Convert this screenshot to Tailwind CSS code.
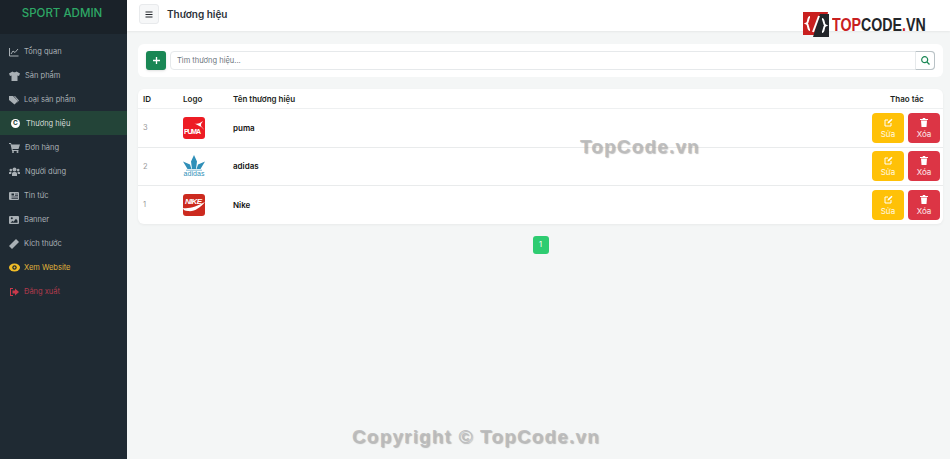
<!DOCTYPE html>
<html lang="en">

<head>
    <meta charset="UTF-8">
    <title>Thương hiệu</title>
    <script src="https://cdn.jsdelivr.net/npm/@tailwindcss/browser@4"></script>
</head>

<body class="relative h-[459px] w-[950px] overflow-hidden flex bg-[#f4f6f6] font-['Inter','Noto_Sans',sans-serif]">
    <!-- Sidebar -->
    <aside class="w-[127px] shrink-0 bg-[#1f2a33] flex flex-col">
        <div class="h-[34px] bg-[#1a2229] flex items-center justify-center text-[#2ea866] text-[11.500px] font-medium pb-[7px] pr-[3px]">SPORT ADMIN</div>
        <nav class="flex flex-col pt-[5px] text-[7.500px] text-[#a9b0b5]">
            <a class="h-6 pt-px flex items-center pl-[9px] gap-[5px]">
                <svg class="w-[10px] h-[10px]" viewBox="0 0 10 10" fill="none" stroke="#a9b0b5" stroke-width="1"><path d="M.5 1v8h9"/><path d="M2 7l2-3 2 1.500 3-3.500"/></svg>
                Tổng quan</a>
            <a class="h-6 pt-px flex items-center pl-[9px] gap-[5px]">
                <svg class="w-[11px] h-[10px]" viewBox="0 0 11 10" fill="#a9b0b5"><path d="M3.500 0.500L0 2.500l1 2.500 1.500-.5V10h6V4.500L10 5l1-2.500L7.500.5C7 1.500 4 1.500 3.500.5z"/></svg>
                Sản phẩm</a>
            <a class="h-6 pt-px flex items-center pl-[9px] gap-[5px]">
                <svg class="w-[10px] h-[10px]" viewBox="0 0 10 10" fill="#a9b0b5"><path d="M0 1h4l5 5-3.500 3.500L0 5z"/><path d="M6 1l4 4.500-2.500 3 1.500-2.500L5 1z"/></svg>
                Loại sản phẩm</a>
            <a class="h-6 pt-px flex items-center pl-[11px] gap-[6px] bg-[#234438] text-[#d5dcd9]">
                <span class="w-[9px] h-[9px] rounded-full bg-white text-[#234438] text-[6.500px] leading-none font-bold flex items-center justify-center">C</span>
                Thương hiệu</a>
            <a class="h-6 pt-px flex items-center pl-[9px] gap-[5px]">
                <svg class="w-[11px] h-[10px]" viewBox="0 0 11 10" fill="#a9b0b5"><path d="M0 0h2l.5 1.500H11L9.500 6H3.500l.2 1H9.500v1H3L1.500 1H0z"/><circle cx="4" cy="9" r="1"/><circle cx="8.500" cy="9" r="1"/></svg>
                Đơn hàng</a>
            <a class="h-6 pt-px flex items-center pl-[9px] gap-[5px]">
                <svg class="w-[11px] h-[10px]" viewBox="0 0 11 10" fill="#a9b0b5"><circle cx="5.500" cy="2.500" r="2"/><circle cx="1.800" cy="3" r="1.300"/><circle cx="9.200" cy="3" r="1.300"/><path d="M3 9V6.500C3 5.500 4 5 5.500 5S8 5.500 8 6.500V9z"/><path d="M0 7V5.500C0 5 .8 4.800 2.500 4.800L2.200 7zM11 7V5.500c0-.5-.8-.7-2.500-.7L8.800 7z"/></svg>
                Người dùng</a>
            <a class="h-6 pt-px flex items-center pl-[9px] gap-[5px]">
                <svg class="w-[10px] h-[10px]" viewBox="0 0 10 10"><rect y="1" width="10" height="8" rx="1" fill="#a9b0b5"/><rect x="2.500" y="2.500" width="2.500" height="2" fill="#1f2a33"/><path d="M6 3h3M6 4.500h3M2.500 6h6.500M2.500 7.500h6.500" stroke="#1f2a33" stroke-width=".7"/></svg>
                Tin tức</a>
            <a class="h-6 pt-px flex items-center pl-[9px] gap-[5px]">
                <svg class="w-[10px] h-[10px]" viewBox="0 0 10 10"><rect y="1" width="10" height="8" rx="1" fill="#a9b0b5"/><circle cx="2.800" cy="3.300" r="1" fill="#1f2a33"/><path d="M1.500 7.800l2-2 1 1 2.500-3 1.500 2v2z" fill="#1f2a33"/></svg>
                Banner</a>
            <a class="h-6 pt-px flex items-center pl-[9px] gap-[5px]">
                <svg class="w-[10px] h-[10px]" viewBox="0 0 10 10" fill="#a9b0b5"><path d="M7 0l3 3-7 7-3-3z"/></svg>
                Kích thước</a>
            <a class="h-6 pt-px flex items-center pl-[9px] gap-[4px] text-[#e0b43a]">
                <svg class="w-[11px] h-[9px]" viewBox="0 0 11 9"><ellipse cx="5.500" cy="4.500" rx="5.500" ry="4" fill="#f2bd27"/><circle cx="5.500" cy="4.500" r="2.200" fill="#1f2a33"/><circle cx="5.500" cy="4.500" r="1" fill="#f2bd27"/></svg>
                Xem Website</a>
            <a class="h-6 pt-px flex items-center pl-[9px] gap-[5px] text-[#b23a4c]">
                <svg class="w-[10px] h-[10px]" viewBox="0 0 10 10" fill="#c9394b"><path d="M4 1H1v8h3V8H2V2h2z"/><path d="M6 1.500L10 5 6 8.500V6.500H3.500v-3H6z"/></svg>
                Đăng xuất</a>
        </nav>
    </aside>

    <!-- Main -->
    <main class="flex-1 min-w-0 flex flex-col">
        <header class="h-[31px] bg-white shadow-[0_1px_2px_rgba(0,0,0,0.06)] flex items-center pl-[12px]">
            <button class="w-5 h-5 rounded-[3px] bg-[#f6f7f8] border border-[#e8eaec] flex items-center justify-center mb-[3px]">
                <svg class="w-[8px] h-[7px]" viewBox="0 0 8 7" fill="none" stroke="#212529" stroke-width="1.200"><path d="M.5 1h7M.5 3.500h7M.5 6h7"/></svg>
            </button>
            <h1 class="ml-2 text-[10px] font-semibold text-[#2b3036] mb-[3px]">Thương hiệu</h1>
        </header>

        <div class="px-[11px] pt-[13px] pr-[7px]">
            <!-- Search card -->
            <div class="h-[33px] bg-white rounded-md flex items-center px-[8px] gap-[4px] pb-[1px]">
                <button class="w-5 h-[19px] rounded-[3px] bg-[#198754] shadow-sm flex items-center justify-center">
                    <svg class="w-[7px] h-[7px]" viewBox="0 0 8 8" stroke="#fff" stroke-width="1.500"><path d="M4 0v8M0 4h8"/></svg>
                </button>
                <div class="flex-1 h-[19px] rounded-[4px] border border-[#e6e9eb] flex items-center justify-between pl-[6px] pt-px text-[7.500px] text-[#6c757d]">
                    Tìm thương hiệu...
                    <span class="w-5 h-[19px] -mr-px flex items-center justify-center rounded-r-[4px] border border-[#b9c2c6] border-l-[#e6e9eb]">
                        <svg class="w-[9px] h-[9px]" viewBox="0 0 9 9" fill="none" stroke="#198754" stroke-width="1.200"><circle cx="3.700" cy="3.700" r="3"/><path d="M6 6l2.500 2.500"/></svg>
                    </span>
                </div>
            </div>

            <!-- Table card -->
            <div class="mt-3 bg-white rounded-md shadow-[0_1px_3px_rgba(0,0,0,0.05)] overflow-hidden">
                <div class="h-5 flex items-center text-[8px] font-semibold text-[#1c1f22] border-b border-[#eef0f1]">
                    <span class="w-[45px] pl-[5px]">ID</span>
                    <span class="w-[50px]">Logo</span>
                    <span class="flex-1">Tên thương hiệu</span>
                    <span class="w-[53px]">Thao tác</span>
                </div>

                <div class="h-[38.500px] flex items-center border-b border-[#e9ebec] text-[8px]">
                    <span class="w-[45px] pl-[5px] text-[#999] text-[7.500px]">3</span>
                    <span class="w-[50px]">
                        <svg class="w-[22px] h-[22px]" viewBox="0 0 22 22"><rect width="22" height="22" rx="3" fill="#ed1c24"/><path d="M11 6c3 2 6 0 9-2-1 2-2 2-2 4s2 2 3 5c-2-4-6-4-10-7z" fill="#fff"/><text x="1" y="16.500" font-size="7" font-weight="900" fill="#fff" font-family="Liberation Sans" textLength="17">PUMA</text></svg>
                    </span>
                    <span class="flex-1 font-semibold text-[#111]">puma</span>
                    <span class="flex gap-[4px] pr-[3px]">
                        <button class="w-8 h-[30px] rounded-[4px] bg-[#ffc107] flex flex-col items-center justify-center gap-[3px] text-[8px] leading-none text-white/90">
                            <svg class="w-[9px] h-[9px]" viewBox="0 0 9 9" fill="none" stroke="#fff" stroke-width="1"><path d="M7 5v3H1V2h3"/><path d="M3.500 5.500l.3-1.500L7.500.8l1 1L5 5.300z" fill="#fff" stroke="none"/></svg>
                            Sửa</button>
                        <button class="w-8 h-[30px] rounded-[4px] bg-[#dc3545] flex flex-col items-center justify-center gap-[3px] text-[8px] leading-none text-white/90">
                            <svg class="w-[8px] h-[9px]" viewBox="0 0 8 9" fill="#fff"><path d="M0 1h2.500L3 0h2l.5 1H8v1H0zM1 2.500h6L6.500 9h-5z"/></svg>
                            Xóa</button>
                    </span>
                </div>

                <div class="h-[38.500px] flex items-center border-b border-[#e9ebec] text-[8px]">
                    <span class="w-[45px] pl-[5px] text-[#999] text-[7.500px]">2</span>
                    <span class="w-[50px]">
                        <svg class="w-[22px] h-[22px]" viewBox="0 0 22 22"><path d="M0 6.500l7 3 1.500 4.500H4.500zM22 6.500l-7 3-1.500 4.500h4zM11 0l3 6.500-1 7.500H9L8 6.500z" fill="#2f8fb8"/><path d="M3 15.200h16" stroke="#2f8fb8" stroke-width=".6"/><text x="11" y="21" text-anchor="middle" font-size="7" fill="#2f8fb8" font-family="Liberation Sans" textLength="21">adidas</text></svg>
                    </span>
                    <span class="flex-1 font-semibold text-[#111]">adidas</span>
                    <span class="flex gap-[4px] pr-[3px]">
                        <button class="w-8 h-[30px] rounded-[4px] bg-[#ffc107] flex flex-col items-center justify-center gap-[3px] text-[8px] leading-none text-white/90">
                            <svg class="w-[9px] h-[9px]" viewBox="0 0 9 9" fill="none" stroke="#fff" stroke-width="1"><path d="M7 5v3H1V2h3"/><path d="M3.500 5.500l.3-1.500L7.500.8l1 1L5 5.300z" fill="#fff" stroke="none"/></svg>
                            Sửa</button>
                        <button class="w-8 h-[30px] rounded-[4px] bg-[#dc3545] flex flex-col items-center justify-center gap-[3px] text-[8px] leading-none text-white/90">
                            <svg class="w-[8px] h-[9px]" viewBox="0 0 8 9" fill="#fff"><path d="M0 1h2.500L3 0h2l.5 1H8v1H0zM1 2.500h6L6.500 9h-5z"/></svg>
                            Xóa</button>
                    </span>
                </div>

                <div class="h-[38px] flex items-center text-[8px]">
                    <span class="w-[45px] pl-[5px] text-[#999] text-[7.500px]">1</span>
                    <span class="w-[50px]">
                        <svg class="w-[22px] h-[22px]" viewBox="0 0 22 22"><rect width="22" height="22" rx="3" fill="#cc2a1f"/><path d="M0 14c7 1 14-2 22-6-5 6-11 10-17 9-3 0-5-1-5-3z" fill="#fff"/><text x="2" y="10" font-size="8" font-weight="900" font-style="italic" fill="#fff" font-family="Liberation Sans" textLength="17">NIKE</text></svg>
                    </span>
                    <span class="flex-1 font-semibold text-[#111]">Nike</span>
                    <span class="flex gap-[4px] pr-[3px]">
                        <button class="w-8 h-[30px] rounded-[4px] bg-[#ffc107] flex flex-col items-center justify-center gap-[3px] text-[8px] leading-none text-white/90">
                            <svg class="w-[9px] h-[9px]" viewBox="0 0 9 9" fill="none" stroke="#fff" stroke-width="1"><path d="M7 5v3H1V2h3"/><path d="M3.500 5.500l.3-1.500L7.500.8l1 1L5 5.300z" fill="#fff" stroke="none"/></svg>
                            Sửa</button>
                        <button class="w-8 h-[30px] rounded-[4px] bg-[#dc3545] flex flex-col items-center justify-center gap-[3px] text-[8px] leading-none text-white/90">
                            <svg class="w-[8px] h-[9px]" viewBox="0 0 8 9" fill="#fff"><path d="M0 1h2.500L3 0h2l.5 1H8v1H0zM1 2.500h6L6.500 9h-5z"/></svg>
                            Xóa</button>
                    </span>
                </div>
            </div>

            <!-- Pagination -->
            <div class="mt-3 flex justify-center">
                <span class="w-4 h-[18px] rounded-[3px] bg-[#2ecc71] text-white text-[7.500px] flex items-center justify-center">1</span>
            </div>
        </div>
    </main>

    <!-- TopCode logo and watermarks, stamped over the page -->
    <div class="absolute left-[803px] top-[12px] flex items-center">
        <svg class="w-[27px] h-[26px] shrink-0" viewBox="0 0 27 26">
            <path d="M0 0h25l-4 23H0z" fill="#c9201f"/>
            <path d="M17 2h9v23H10z" fill="#23262a"/>
            <path d="M7 5C4.500 5 6 10.500 3.500 11.500 6 12.500 4.500 18 7 18" fill="none" stroke="#fff" stroke-width="2"/>
            <path d="M10 20l6-16" stroke="#fff" stroke-width="2"/>
            <path d="M19 7c2.500 0 1 5.500 3.500 6.500C20 14.500 21.500 20 19 20" fill="none" stroke="#fff" stroke-width="2"/>
        </svg>
        <span class="ml-[2px] mt-[-1px] w-[94px] origin-left scale-x-[.79] whitespace-nowrap text-[18px] font-bold font-['Liberation_Sans',sans-serif] text-[#23262a] leading-none"><span class="text-[#c9201f]">TOP</span>CODE<span class="text-[#c9201f]">.</span>VN</span>
    </div>
    <div class="absolute left-[580px] top-[135px] text-[19px] leading-[23px] font-bold tracking-[1.150px] font-['Liberation_Sans',sans-serif] text-[#bababa]/90 [text-shadow:1px_1px_1px_rgba(0,0,0,0.25)]">TopCode.vn</div>
    <div class="absolute left-[352px] top-[425px] text-[19px] leading-[23px] font-bold tracking-[1.150px] font-['Liberation_Sans',sans-serif] text-[#bababa]/90 [text-shadow:1px_1px_1px_rgba(0,0,0,0.25)]">Copyright © TopCode.vn</div>
</body>

</html>
